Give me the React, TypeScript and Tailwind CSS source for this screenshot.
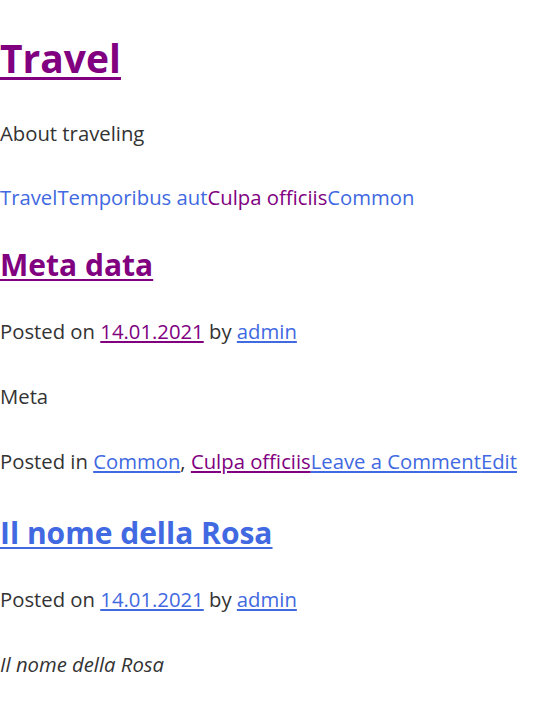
export default function App() {
  const blue = 'text-[#4169e1]';
  const purple = 'text-[#800080]';

  return (
    <div className="w-full min-h-screen bg-white text-[#333333] font-['Open_Sans','Noto_Sans',sans-serif] text-[20.3px]">
      {/* Site header */}
      <header className="pt-[34px]">
        <h1 className="text-[39px] leading-[48px] font-bold">
          <a href="#" className={`${purple} underline decoration-[3px] underline-offset-[4px]`}>Travel</a>
        </h1>
        <p className="mt-[37px] leading-[28px]">About traveling</p>
      </header>

      {/* Category menu */}
      <nav className="mt-[36px] leading-[28px]">
        <a href="#" className={blue}>Travel</a>
        <a href="#" className={blue}>Temporibus aut</a>
        <a href="#" className={purple}>Culpa officiis</a>
        <a href="#" className={blue}>Common</a>
      </nav>

      {/* Posts */}
      <article className="mt-[36px]">
        <h2 className="text-[30px] leading-[36px] font-bold">
          <a href="#" className={`${purple} underline decoration-[2px] underline-offset-[3px]`}>Meta data</a>
        </h2>
        <p className="mt-[34px] leading-[28px]">
          Posted on <a href="#" className={`${purple} underline`}>14.01.2021</a> by{' '}
          <a href="#" className={`${blue} underline`}>admin</a>
        </p>
        <p className="mt-[37px] leading-[28px]">Meta</p>
        <p className="mt-[37px] leading-[28px]">
          Posted in <a href="#" className={`${blue} underline`}>Common</a>,{' '}
          <a href="#" className={`${purple} underline`}>Culpa officiis</a>
          <a href="#" className={`${blue} underline`}>Leave a Comment</a>
          <a href="#" className={`${blue} underline`}>Edit</a>
        </p>
      </article>

      <article className="mt-[40px]">
        <h2 className="text-[30px] leading-[36px] font-bold">
          <a href="#" className={`${blue} underline decoration-[2px] underline-offset-[3px]`}>Il nome della Rosa</a>
        </h2>
        <p className="mt-[34px] leading-[28px]">
          Posted on <a href="#" className={`${blue} underline`}>14.01.2021</a> by{' '}
          <a href="#" className={`${blue} underline`}>admin</a>
        </p>
        <p className="mt-[37px] leading-[28px] italic">Il nome della Rosa</p>
      </article>
    </div>
  );
}
